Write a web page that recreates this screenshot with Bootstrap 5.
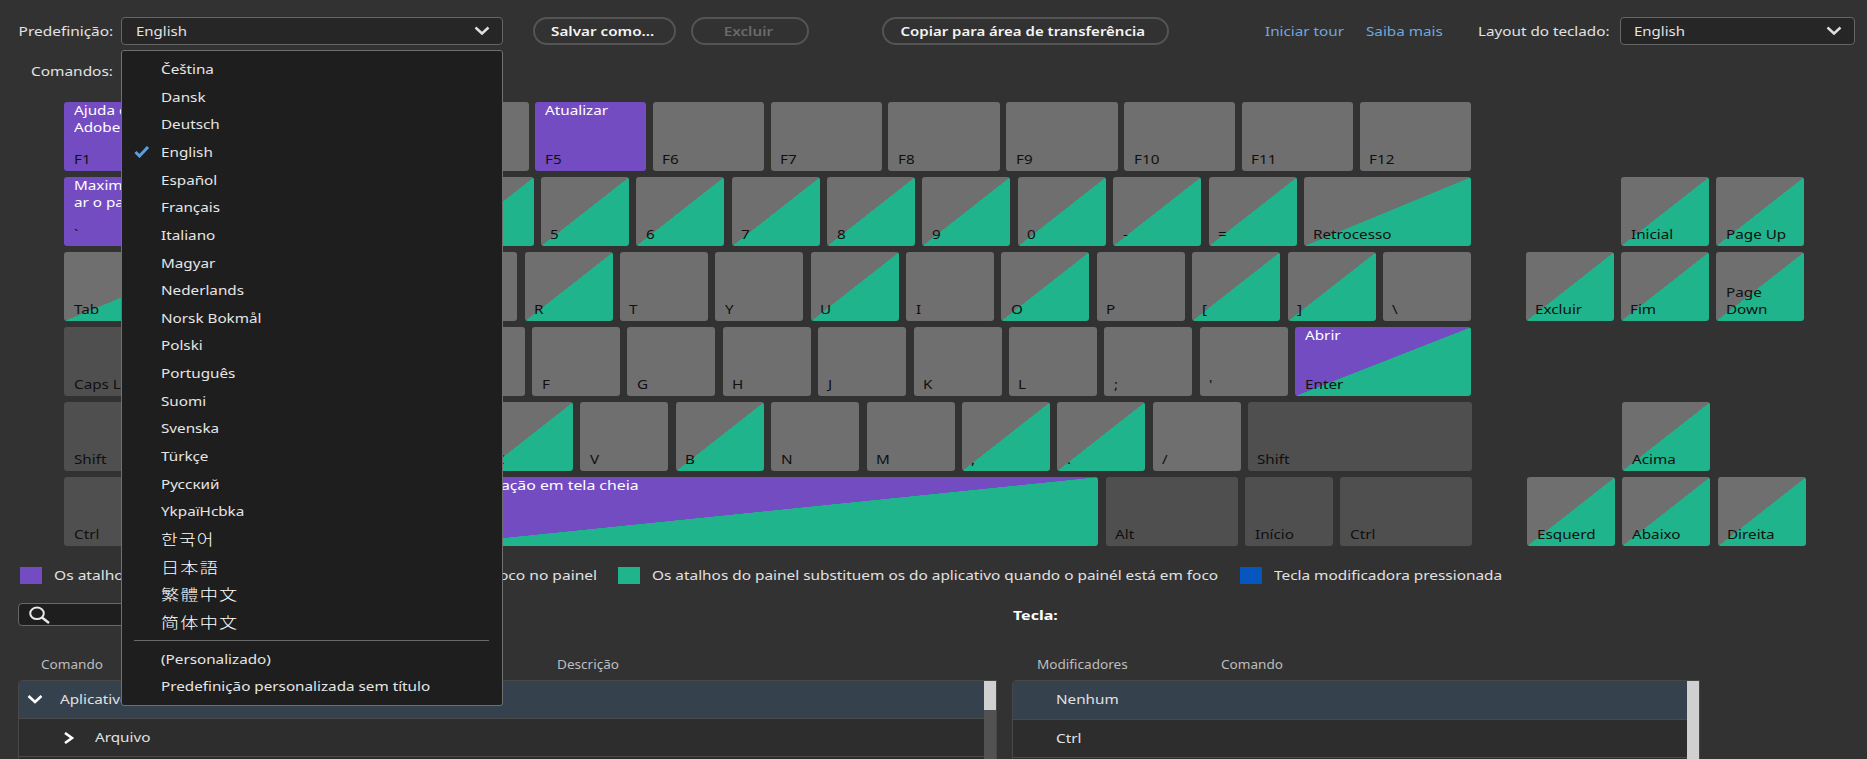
<!DOCTYPE html>
<html lang="pt-BR">

<head>
    <meta charset="UTF-8">
    <meta name="viewport" content="width=device-width, initial-scale=1.0">
    <title>Atalhos de teclado</title>
    <link href="https://cdn.jsdelivr.net/npm/bootstrap@5.3.0/dist/css/bootstrap.min.css" rel="stylesheet">
    <style>
        body {
            width: 1867px;
            height: 759px;
            overflow: hidden;
            background: #323232;
            color: #e2e2e2;
            font-family: "Noto Sans", "Noto Sans CJK KR", "Noto Sans CJK JP", sans-serif;
            font-size: 12.6px;
            line-height: 17px;
            white-space: nowrap;
        }

        /* wide lettering used everywhere in the dialog */
        .wide {
            display: inline-block;
            transform: scaleX(1.21);
            transform-origin: 0 50%;
        }

        .wide-end { transform-origin: 100% 50%; }
        .wide-mid { transform-origin: 50% 50%; }

        /* top bar */
        .topbar { height: 28px; margin-top: 17px; padding-left: 121px; }
        .field-label { width: 113px; margin-left: -121px; margin-right: 8px; text-align: right; }
        .field-label .wide { transform: scaleX(1.225); }
        .picker {
            height: 28px;
            background: #262626;
            border: 1px solid #666;
            border-radius: 4px;
            padding: 0 12px 0 14px;
        }
        .picker .wide { transform: scaleX(1.19); }
        .picker svg { margin-top: -1px; }
        .picker-preset { width: 382px; }
        .picker-layout { width: 235px; margin-left: 10px; padding-left: 13px; }

        .btn-key {
            height: 28px;
            padding: 0;
            border: 2px solid #545454;
            border-radius: 14px;
            color: #f5f5f5;
            font-size: 12.6px;
            font-weight: 600;
            line-height: 23px;
        }
        .btn-key:disabled { color: #6a6a6a; border-color: #545454; opacity: 1; }
        .btn-save { width: 143px; margin-left: 30px; padding-right: 3px; }
        .btn-del { width: 118px; margin-left: 15px; padding-right: 3px; }
        .btn-copy { width: 287px; margin-left: 73px; padding-right: 5px; }
        .btn-copy .wide { transform: scaleX(1.19); }
        .toplink { color: #6fa8de; text-decoration: none; }
        .link-tour { width: 101px; margin-left: 96px; }
        .link-more { width: 112px; }
        .layout-label { width: 132px; }

        .cmd-line { height: 18px; margin-top: 18px; }
        .cmd-line .field-label { margin-left: 0; }

        /* preset menu */
        .preset-menu {
            position: absolute;
            top: 50px;
            left: 121px;
            z-index: 10;
            width: 382px;
            height: 656px;
            padding: 4.6px 0 0;
            margin: 0;
            background: #1e1e1e;
            border: 1px solid #707070;
            border-radius: 3px;
            list-style: none;
            font-size: 12.6px;
        }
        .preset-menu li { height: 27.67px; padding-left: 12px; color: #e6e6e6; }
        .preset-menu .tick { width: 26.5px; flex: none; }
        .preset-menu .rule { height: 1.5px; background: #686868; margin: 3.5px 13px 4px 12px; padding: 0; }
        .preset-menu .cjk { font-size: 14.5px; font-weight: 300; letter-spacing: 1px; color: #fff; }
        .cjk .wide { transform: scaleX(1.25); }

        /* keyboard */
        .keyboard { margin: 21px 0 0 64px; display: grid; row-gap: 6px; }
        .key-row { height: 69px; }
        .main-keys { width: 1407px; margin-right: 54.5px; }
        .key-row.low .main-keys { width: 1408.5px; }
        .side-keys { width: 278.5px; }
        .kb-key {
            height: 69px;
            flex: none;
            padding: 0 0 3.5px 9.5px;
            border-radius: 3px;
            overflow: hidden;
            color: #101010;
        }
        .key-free { background: #6f6f6f; }
        .key-mod { background: #4f4f4f; }
        .key-app { background: #744cc2; }
        .key-panel { background: linear-gradient(to bottom right, #6f6f6f 50%, #1fb48b 50.3%); }
        .key-both { background: linear-gradient(to bottom right, #744cc2 50%, #1fb48b 50.3%); }
        .key-cmd { color: #fff; min-height: 17px; }
        .key-space .key-cmd { transform: scaleX(1.255); }

        /* legend */
        .legend { height: 18px; margin-top: 20px; padding-left: 20px; }
        .swatch { width: 22px; height: 17px; margin-right: 12px; }
        .legend-app { width: 564px; }
        .legend-panel { width: 588px; }
        .legend .wide { transform: scaleX(1.22); }
        .legend .legend-app .wide { transform: scaleX(1.235); }

        .search-row { height: 23px; margin-top: 19px; padding-left: 18px; }
        .search-box { width: 360px; height: 23px; background: #1e1e1e; border: 1px solid #686868; border-radius: 4px; padding-left: 10px; }
        .key-title { margin-left: 635px; margin-top: 2px; color: #fff; font-weight: 700; }
        .key-title .wide { transform: scaleX(1.27); }

        .heads { height: 17px; margin-top: 30px; padding-left: 41px; color: #bdbdbd; font-size: 11.8px; }
        .heads .wide { transform: scaleX(1.15); }
        .panes { margin-top: 7px; }
        .pane-left { width: 979px; margin-left: 18px; margin-right: 15px; }
        .pane-right { width: 688px; }
        .pane { height: 90px; border: 1px solid #484848; border-radius: 4px 0 0 0; background: #2d2d2d; overflow: hidden; }
        .pane-line { height: 38px; border-bottom: 1px solid #4a4a4a; }
        .pane-right .pane-line { height: 38.5px; }
        .pane-line.active { background: #35414c; }
        .pane-right .wide { margin-left: 43px; }
        .lvl-1 { margin-left: 17px; }
        .lvl-2 { margin-left: 20px; }
        .arrow-2 { margin-left: 44px; }
        .bar { width: 12.5px; background: #525252; flex: none; }
        .bar-thumb { background: #d0d0d0; }
    </style>
</head>

<body>

    <!-- Preset, buttons and layout -->
    <header class="topbar d-flex align-items-center">
        <div class="field-label"><span class="wide wide-end">Predefinição:</span></div>
        <div class="picker picker-preset d-flex align-items-center justify-content-between">
            <span class="wide">English</span>
            <svg width="16" height="10" viewBox="0 0 16 10" fill="none" stroke="#e0e0e0" stroke-width="2.4"><path d="M1.5 1.5 8 7.5 14.5 1.5" /></svg>
        </div>
        <button type="button" class="btn btn-key btn-save"><span class="wide wide-mid">Salvar como...</span></button>
        <button type="button" class="btn btn-key btn-del" disabled><span class="wide wide-mid">Excluir</span></button>
        <button type="button" class="btn btn-key btn-copy"><span class="wide wide-mid">Copiar para área de transferência</span></button>
        <a href="#" class="toplink link-tour"><span class="wide">Iniciar tour</span></a>
        <a href="#" class="toplink link-more"><span class="wide">Saiba mais</span></a>
        <div class="layout-label"><span class="wide">Layout do teclado:</span></div>
        <div class="picker picker-layout d-flex align-items-center justify-content-between">
            <span class="wide">English</span>
            <svg width="16" height="10" viewBox="0 0 16 10" fill="none" stroke="#e0e0e0" stroke-width="2.4"><path d="M1.5 1.5 8 7.5 14.5 1.5" /></svg>
        </div>
    </header>
    <div class="cmd-line"><div class="field-label"><span class="wide wide-end">Comandos:</span></div></div>

    <!-- Open preset list -->
    <ul class="preset-menu" id="preset-menu"></ul>

    <!-- Keyboard, filled by the script below -->
    <main class="keyboard" id="keyboard"></main>

    <div class="legend d-flex align-items-center">
        <span class="swatch key-app"></span>
        <div class="legend-app"><span class="wide">Os atalhos do aplicativo substituem os do painel quando há foco no painel</span></div>
        <span class="swatch" style="background:#1fb48b"></span>
        <div class="legend-panel"><span class="wide">Os atalhos do painel substituem os do aplicativo quando o painél está em foco</span></div>
        <span class="swatch" style="background:#0556bf"></span>
        <span class="wide">Tecla modificadora pressionada</span>
    </div>

    <div class="search-row d-flex align-items-center">
        <div class="search-box d-flex align-items-center">
            <svg width="22" height="18" viewBox="0 0 22 18" fill="none" stroke="#e8e8e8" stroke-width="2"><ellipse cx="8" cy="7.3" rx="6.8" ry="5.8" /><path d="M13 11.5 20 17" stroke-width="2.4" /></svg>
        </div>
        <div class="key-title"><span class="wide">Tecla:</span></div>
    </div>

    <div class="heads d-flex">
        <div style="width:516px"><span class="wide">Comando</span></div>
        <div style="width:480px"><span class="wide">Descrição</span></div>
        <div style="width:184px"><span class="wide">Modificadores</span></div>
        <div><span class="wide">Comando</span></div>
    </div>

    <div class="panes d-flex">
        <section class="pane pane-left d-flex">
            <div class="flex-grow-1">
                <div class="pane-line active d-flex align-items-center">
                    <svg class="ms-2" width="16" height="9" viewBox="0 0 16 9" fill="none" stroke="#fff" stroke-width="2.6"><path d="M1.5 1 8 7 14.5 1" /></svg>
                    <span class="wide lvl-1">Aplicativo</span>
                </div>
                <div class="pane-line d-flex align-items-center">
                    <svg class="arrow-2" width="12" height="12" viewBox="0 0 12 12" fill="none" stroke="#fff" stroke-width="2.6"><path d="M2 1 9 6 2 11" /></svg>
                    <span class="wide lvl-2">Arquivo</span>
                </div>
            </div>
            <div class="bar"><div class="bar-thumb" style="height:28.5px"></div></div>
        </section>
        <section class="pane pane-right d-flex">
            <div class="flex-grow-1">
                <div class="pane-line active d-flex align-items-center"><span class="wide">Nenhum</span></div>
                <div class="pane-line d-flex align-items-center"><span class="wide">Ctrl</span></div>
            </div>
            <div class="bar bar-thumb"></div>
        </section>
    </div>

    <script src="https://cdn.jsdelivr.net/npm/bootstrap@5.3.0/dist/js/bootstrap.bundle.min.js"></script>

    <script>
        const presets = ['Čeština', 'Dansk', 'Deutsch', 'English', 'Español', 'Français', 'Italiano', 'Magyar',
            'Nederlands', 'Norsk Bokmål', 'Polski', 'Português', 'Suomi', 'Svenska', 'Türkçe', 'Русский', 'YkpaïHcbka',
            '한국어', '日本語', '繁體中文', '简体中文', '-', '(Personalizado)', 'Predefinição personalizada sem título'];
        const tick = '<svg width="16" height="12" viewBox="0 0 16 12" fill="none" stroke="#5b9de0" stroke-width="3"><path d="M1.5 6 5.5 10 14 1" /></svg>';

        document.getElementById('preset-menu').innerHTML = presets.map((name, i) => {
            if (name === '-') return '<li class="rule"></li>';
            const cjk = i > 16 && i < 21 ? ' cjk' : '';
            return `<li class="d-flex align-items-center${cjk}"><span class="tick d-flex">${name === 'English' ? tick : ''}</span><span class="wide">${name}</span></li>`;
        }).join('');

        // key: [label, type, width, command]
        const N = 88;
        const row = (labels, panel) => labels.split(' ').map(l => [l, panel.includes(l) ? 'panel' : 'free', N]);
        const rows = [
            {
                main: [['F1', 'app', 111.3, 'Ajuda do<br>Adobe'], ...['F2', 'F3', 'F4'].map(l => [l, 'free', 111.3]),
                    ['F5', 'app', 111.3, 'Atualizar'],
                    ...['F6', 'F7', 'F8', 'F9', 'F10', 'F11', 'F12'].map(l => [l, 'free', 111.3])],
                side: []
            },
            {
                main: [['`', 'app', N, 'Maximiz<br>ar o painel'], ...row('1 2 3 4 5 6 7 8 9 0 - =', '1234567890-='), ['Retrocesso', 'panel', 167]],
                side: [['Inicial', 'panel', N], ['Page Up', 'panel', N]]
            },
            {
                main: [['Tab', 'panel', 167], ...row('Q W E R T Y U I O P [ ] \\', 'RUO[]')],
                side: [['Excluir', 'panel', N], ['Fim', 'panel', N], ['Page<br>Down', 'panel', N]]
            },
            {
                main: [['Caps Lock', 'mod', 174.5], ...row("A S D F G H J K L ; '", ''), ['Enter', 'both', 176, 'Abrir']],
                side: []
            },
            {
                low: true,
                main: [['Shift', 'mod', 223], ...row('Z X C V B N M , . /', 'CB,.'), ['Shift', 'mod', 224.5]],
                side: [['Acima', 'panel', N]]
            },
            {
                low: true,
                main: [['Ctrl', 'mod', 132], ['Início', 'mod', N], ['Alt', 'mod', 118], ['', 'both key-space', 674, 'Apresentação em tela cheia'],
                    ['Alt', 'mod', 132], ['Início', 'mod', N], ['Ctrl', 'mod', 132]],
                side: [['Esquerd', 'panel', N], ['Abaixo', 'panel', N], ['Direita', 'panel', N]]
            }
        ];

        const key = ([label, type, width, cmd]) => `
            <div class="kb-key key-${type} d-flex flex-column justify-content-between align-items-start" style="width:${width}px">
                <div class="key-cmd wide">${cmd || ''}</div>
                <div class="wide">${label}</div>
            </div>`;

        // Short side rows are aligned right, the single arrow key sits in the middle
        const sideAlign = n => n === 3 ? 'justify-content-between' : n === 1 ? 'justify-content-center' : 'justify-content-end';

        document.getElementById('keyboard').innerHTML = rows.map(r => `
            <div class="key-row d-flex${r.low ? ' low' : ''}">
                <div class="main-keys d-flex justify-content-between">${r.main.map(key).join('')}</div>
                <div class="side-keys d-flex ${sideAlign(r.side.length)}" style="gap:7px">${r.side.map(key).join('')}</div>
            </div>`).join('');
    </script>

</body>

</html>
